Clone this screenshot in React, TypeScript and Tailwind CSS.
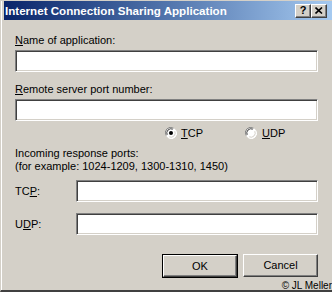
import React from "react";

const sunken =
  "border border-t-[#808080] border-l-[#808080] border-b-white border-r-white shadow-[inset_1px_1px_0_#404040,inset_-1px_-1px_0_#d4d0c8] bg-white";

function Input({ className = "" }: { className?: string }) {
  return <div className={`h-[22px] ${sunken} ${className}`} />;
}

function Radio({ checked }: { checked: boolean }) {
  return (
    <svg width="12" height="12" viewBox="0 0 12 12" className="shrink-0">
      <circle cx="6" cy="6" r="5.5" fill="#ffffff" />
      <path d="M1.2 8.5 A5.3 5.3 0 0 1 8.5 1.2" stroke="#808080" strokeWidth="1" fill="none" />
      <path d="M2.2 7.8 A4.2 4.2 0 0 1 7.8 2.2" stroke="#404040" strokeWidth="1" fill="none" />
      <path d="M3.5 10.8 A5.3 5.3 0 0 0 10.8 3.5" stroke="#ffffff" strokeWidth="1" fill="none" />
      <path d="M4.2 9.8 A4.2 4.2 0 0 0 9.8 4.2" stroke="#d4d0c8" strokeWidth="1" fill="none" />
      {checked && <circle cx="6" cy="6" r="2" fill="#000000" />}
    </svg>
  );
}

function CapButton({ children }: { children: React.ReactNode }) {
  return (
    <div className="w-[16px] h-[14px] bg-[#d4d0c8] border border-t-white border-l-white border-b-[#404040] border-r-[#404040] shadow-[inset_-1px_-1px_0_#808080] flex items-center justify-center text-black font-bold text-[11px] leading-none">
      {children}
    </div>
  );
}

function Button({ label, def }: { label: string; def?: boolean }) {
  const inner = (
    <div className="h-full w-full bg-[#d4d0c8] border border-t-white border-l-white border-b-[#404040] border-r-[#404040] shadow-[inset_-1px_-1px_0_#808080] flex items-center justify-center text-[11px]">
      {label}
    </div>
  );
  return def ? (
    <div className="w-[76px] h-[24px] border border-black">{inner}</div>
  ) : (
    <div className="w-[75px] h-[23px]">{inner}</div>
  );
}

export default function App() {
  return (
    <div
      className="w-[332px] h-[292px] bg-[#d4d0c8] relative overflow-hidden text-black text-[11px] leading-[13px]"
      style={{ fontFamily: '"Liberation Sans", Arial, sans-serif' }}
    >
      <div className="h-full border-l border-l-[#d4d0c8] border-t border-t-[#d4d0c8] border-b-2 border-b-[#404040]">
        <div className="h-full border-l border-l-white flex flex-col">
          <div className="ml-[2px] h-[19px] bg-gradient-to-r from-[#0a246a] to-[#a6caf0] flex items-center justify-between pl-[1px] pr-[5px]">
            <span className="text-white font-bold text-[11.6px]">Internet Connection Sharing Application</span>
            <div className="flex">
              <CapButton>?</CapButton>
              <CapButton>
                <svg width="8" height="7" viewBox="0 0 8 7">
                  <path d="M0.5 0.5 L7 6.5 M7 0.5 L0.5 6.5" stroke="#000" strokeWidth="1.6" />
                </svg>
              </CapButton>
            </div>
          </div>

          <div className="pl-[13px] pr-[13px] flex flex-col">
            <div className="mt-[14px] h-[13px]">
              <u>N</u>ame of application:
            </div>
            <Input className="mt-[3px] w-[303px]" />
            <div className="mt-[11px] h-[13px]">
              <u>R</u>emote server port number:
            </div>
            <Input className="mt-[3px] w-[303px]" />

            <div className="mt-[6px] h-[12px] flex items-center">
              <div className="ml-[150px] flex items-center gap-[4px]">
                <Radio checked />
                <span>
                  <u>T</u>CP
                </span>
              </div>
              <div className="ml-[42px] flex items-center gap-[5px]">
                <Radio checked={false} />
                <span>
                  <u>U</u>DP
                </span>
              </div>
            </div>

            <div className="mt-[8px]">Incoming response ports:</div>
            <div>(for example: 1024-1209, 1300-1310, 1450)</div>

            <div className="mt-[7px] flex items-center">
              <span className="w-[61px]">
                TC<u>P</u>:
              </span>
              <Input className="w-[242px]" />
            </div>
            <div className="mt-[11px] flex items-center">
              <span className="w-[61px]">
                U<u>D</u>P:
              </span>
              <Input className="w-[242px]" />
            </div>

            <div className="mt-[19px] flex justify-end gap-[5px] pr-[1px]">
              <Button label="OK" def />
              <Button label="Cancel" />
            </div>
          </div>
        </div>
      </div>
      <div className="absolute right-0 bottom-[1px] text-[10px] leading-[11px]">© JL Meller</div>
    </div>
  );
}
